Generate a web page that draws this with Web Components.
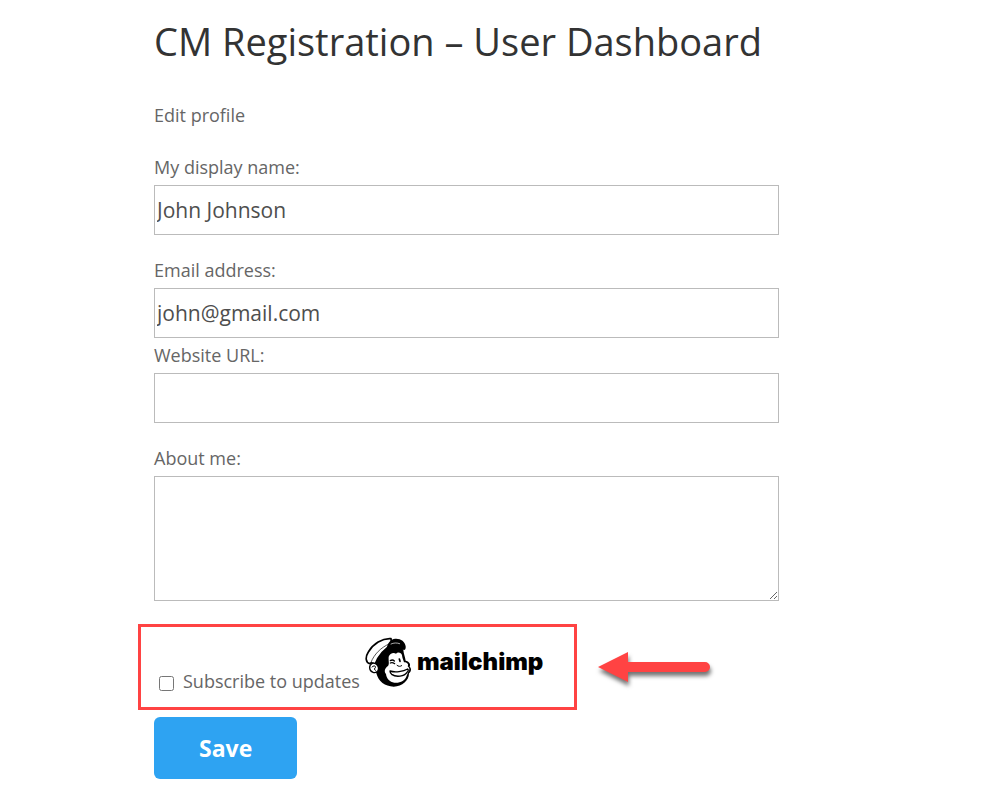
<!DOCTYPE html>
<html lang="en">
<head>
<meta charset="utf-8">
<title>User Dashboard</title>
<style>
  body {
    margin: 0;
    background: #fff;
    color: #666;
    font: 18px/24px "Open Sans", sans-serif;
  }
</style>
</head>
<body>
<user-dashboard></user-dashboard>

<script>
// Clone a template into an open shadow root
function attach(el, html) {
  const template = document.createElement('template');
  template.innerHTML = html;
  el.attachShadow({ mode: 'open' });
  el.shadowRoot.appendChild(template.content.cloneNode(true));
}

class ProfileField extends HTMLElement {
  constructor() {
    super();
    attach(this, /*html*/`
      <style>
        :host {
          display: block;
        }
        label {
          display: block;
          margin-bottom: 6px;
        }
        input, textarea {
          display: block;
          box-sizing: border-box;
          width: 100%;
          height: 50px;
          margin: 0;
          padding: 2px;
          border: 1px solid #bbb;
          border-radius: 0;
          background: #fff;
          color: #4e4e4e;
          font: 21px/30px "Open Sans", sans-serif;
        }
        textarea {
          height: 125px;
        }
      </style>
      <label for="control"><slot></slot></label>
    `);
    const type = this.getAttribute('type') || 'text';
    const control = document.createElement(type === 'textarea' ? 'textarea' : 'input');
    if (type !== 'textarea') control.type = type;
    control.id = 'control';
    control.value = this.getAttribute('value') || '';
    this.shadowRoot.appendChild(control);
  }
}

class MailchimpLogo extends HTMLElement {
  constructor() {
    super();
    attach(this, /*html*/`
      <style>
        :host {
          display: flex;
          align-items: flex-start;
          gap: 5px;
          height: 56px;
          color: #000;
        }
        svg {
          display: block;
          width: 47px;
          height: 50px;
        }
        span {
          font: 900 24px/50px Inter, sans-serif;
        }
      </style>
      <svg viewBox="6 5 141 150" aria-hidden="true">
        <!-- head and hair -->
        <path d="M30 86C36 66 52 46 72 34C92 28 116 32 121 44C122 56 126 64 128 76C138 78 144 86 140 94C147 100 144 110 138 114C138 136 118 153 92 154C66 154 46 138 40 114Z"/>
        <!-- face -->
        <path fill="#fff" d="M77 64C80 54 92 50 99 55C105 49 115 52 117 60C118 68 121 74 123 81C132 81 138 86 134 93C140 97 141 104 136 109C134 112 133 117 131 121C127 136 110 144 94 142C80 140 70 129 69 116C62 108 66 98 75 92C80 86 76 76 77 64Z"/>
        <g fill="none" stroke="#000" stroke-linecap="round" stroke-linejoin="round" stroke-width="4">
          <!-- cap with its band -->
          <path fill="#fff" stroke-width="5" d="M20 85C8 82 6 66 16 50C30 26 58 8 84 10L86 30C66 38 46 60 36 87C30 82 24 82 20 85Z"/>
          <path stroke-width="2" d="M24 81C33 57 54 36 80 25"/>
          <!-- ear -->
          <path fill="#fff" d="M45 106C38 116 21 112 20 98C19 86 31 80 39 86C46 91 48 99 45 106Z"/>
          <path stroke-width="3" d="M27 95C32 89 40 92 37 97L34 101L37 105"/>
          <!-- brow and eyes -->
          <path stroke-width="4" d="M82 76C87 73 91 74 94 77M82 83C87 80 91 82 95 85"/>
          <path stroke-width="5" d="M109 71L111 78"/>
          <path stroke-width="3" d="M102 90C106 94 112 94 116 91"/>
          <!-- mouth -->
          <path stroke-width="4" d="M81 107C96 112 121 109 134 101C137 104 136 108 132 111C124 123 100 127 86 117C82 114 81 111 81 107Z"/>
        </g>
        <!-- visor -->
        <path d="M70 42C73 24 82 11 97 10C113 9 126 18 128 33C129 42 125 47 118 42C102 32 80 38 70 50Z"/>
        <path fill="none" stroke="#fff" stroke-linecap="round" stroke-width="2" d="M84 26C92 22 102 22 110 25"/>
      </svg>
      <span>mailchimp</span>
    `);
  }
}

class SubscribeBox extends HTMLElement {
  constructor() {
    super();
    attach(this, /*html*/`
      <style>
        :host {
          display: flex;
          align-items: flex-end;
          width: fit-content;
          margin-left: -16px;
          padding: 10px 31px 14px 18px;
          border: 3px solid #ff4343;
        }
        input {
          width: 15px;
          height: 15px;
          margin: 0 9px 2px 0;
        }
        label {
          margin-right: 5px;
        }
      </style>
      <input type="checkbox" id="subscribe">
      <label for="subscribe"><slot></slot></label>
      <mailchimp-logo></mailchimp-logo>
    `);
  }
}

class CalloutArrow extends HTMLElement {
  constructor() {
    super();
    attach(this, /*html*/`
      <style>
        :host {
          display: block;
        }
        svg {
          display: block;
          width: 112px;
          height: 30px;
          overflow: visible;
          filter: drop-shadow(1px 4px 2px rgba(0, 0, 0, .55));
        }
      </style>
      <svg viewBox="0 0 112 30" aria-hidden="true">
        <path fill="#ff4343" d="M0 15L30 0V10H107A5 5 0 0 1 107 20H30V30Z"/>
      </svg>
    `);
  }
}

class SaveButton extends HTMLElement {
  constructor() {
    super();
    attach(this, /*html*/`
      <style>
        :host {
          display: block;
        }
        button {
          padding: 16px 45px;
          border: 0;
          border-radius: 6px;
          background: #2ea3f2;
          color: #fff;
          font: 700 23px/30px "Open Sans", sans-serif;
          cursor: pointer;
        }
      </style>
      <button type="submit"><slot></slot></button>
    `);
  }
}

class UserDashboard extends HTMLElement {
  constructor() {
    super();
    attach(this, /*html*/`
      <style>
        :host {
          display: block;
          box-sizing: border-box;
          width: 77.9%;
          padding: 17px 0 20px 15.4%;
        }
        h1 {
          margin: 0 0 38px;
          color: #333;
          font-size: 38px;
          font-weight: 400;
          line-height: 48px;
        }
        p {
          margin: 0 0 28px;
        }
        form {
          display: flex;
          flex-direction: column;
          gap: 23px;
        }
        .pair {
          display: grid;
          gap: 5px;
        }
        .row {
          display: flex;
          align-items: center;
          gap: 21px;
        }
        .actions {
          display: grid;
          gap: 7px;
        }
      </style>
      <main>
        <h1>CM Registration – User Dashboard</h1>
        <p>Edit profile</p>
        <form>
          <profile-field value="John Johnson">My display name:</profile-field>
          <div class="pair">
            <profile-field type="email" value="john@gmail.com">Email address:</profile-field>
            <profile-field type="url">Website URL:</profile-field>
          </div>
          <profile-field type="textarea">About me:</profile-field>
          <div class="actions">
            <div class="row">
              <subscribe-box>Subscribe to updates</subscribe-box>
              <callout-arrow></callout-arrow>
            </div>
            <save-button>Save</save-button>
          </div>
        </form>
      </main>
    `);
  }
}

window.customElements.define('profile-field', ProfileField);
window.customElements.define('mailchimp-logo', MailchimpLogo);
window.customElements.define('subscribe-box', SubscribeBox);
window.customElements.define('callout-arrow', CalloutArrow);
window.customElements.define('save-button', SaveButton);
window.customElements.define('user-dashboard', UserDashboard);
</script>
</body>
</html>
